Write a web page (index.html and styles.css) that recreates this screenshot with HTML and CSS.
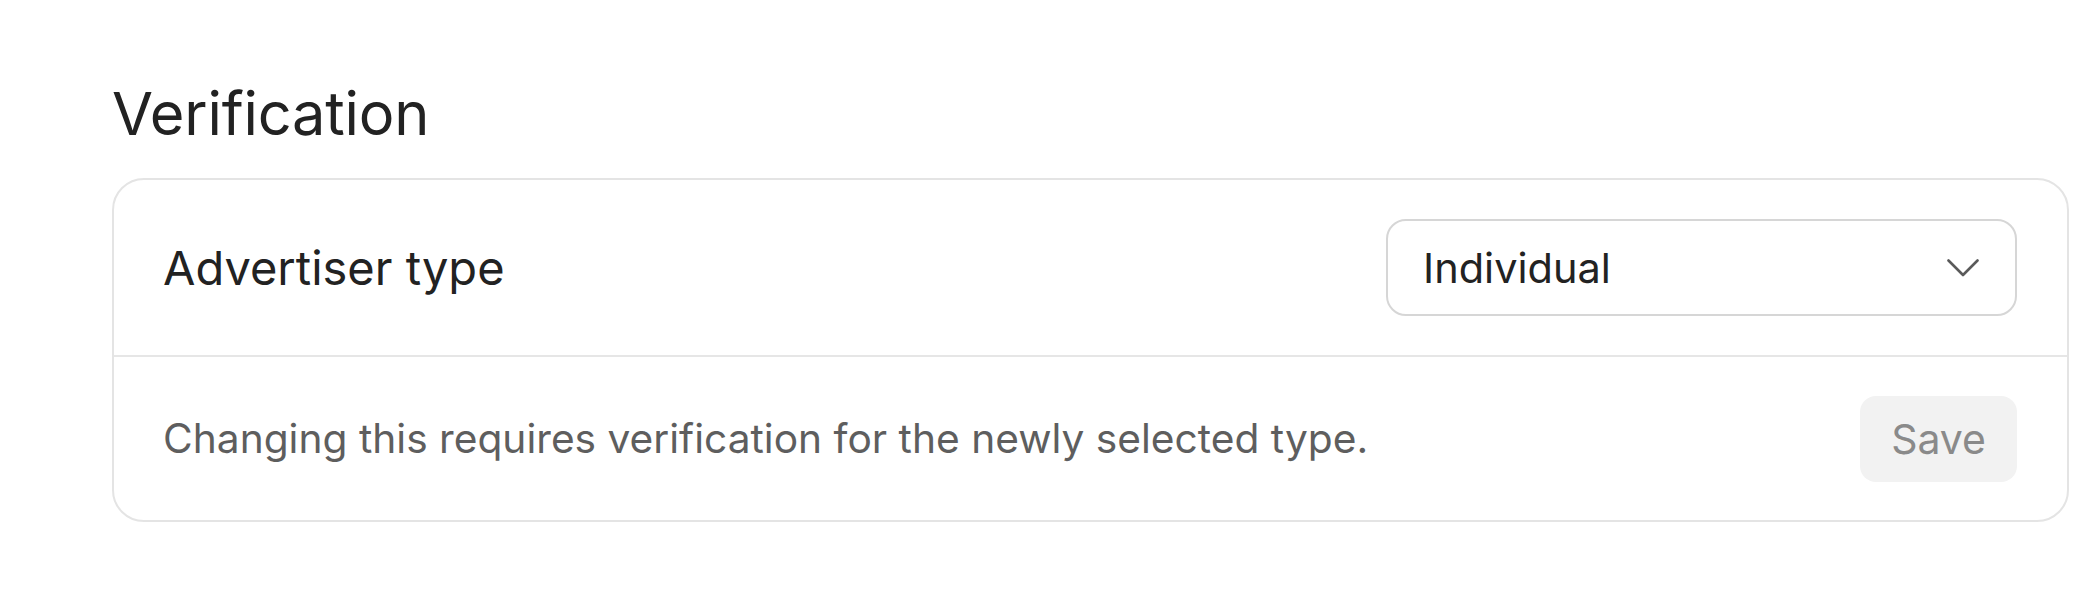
FILE: index.html
```html
<!DOCTYPE html>
<html lang="en">
<head>
<meta charset="utf-8">
<title>Verification</title>
<link rel="stylesheet" href="styles.css">
</head>
<body>
<main class="page">
  <h2 class="title">Verification</h2>
  <section class="card">
    <div class="row row-main">
      <span class="label">Advertiser type</span>
      <div class="select">
        <span class="select-value">Individual</span>
        <svg class="chevron" viewBox="0 0 32 18" width="32" height="18" aria-hidden="true">
          <polyline points="1.5,1.5 16,16 30.5,1.5" fill="none" stroke="#5a5a5a" stroke-width="2.6" stroke-linecap="round" stroke-linejoin="round"/>
        </svg>
      </div>
    </div>
    <div class="row row-foot">
      <span class="hint">Changing this requires verification for the newly selected type.</span>
      <button class="save" type="button" disabled>Save</button>
    </div>
  </section>
</main>
</body>
</html>
```

FILE: styles.css
```css
html, body {
  margin: 0;
  padding: 0;
  background: #ffffff;
}

body {
  font-family: Inter, "Liberation Sans", Arial, sans-serif;
  color: #222222;
}

.page {
  padding: 77px 22px 0 112px;
}

.title {
  margin: 0 0 29px 0;
  font-size: 59.5px;
  line-height: 72px;
  font-weight: 400;
  color: #222222;
  letter-spacing: -0.2px;
}

.card {
  border: 2px solid #e4e4e4;
  border-radius: 32px;
  background: #ffffff;
}

.row {
  display: flex;
  align-items: center;
  justify-content: space-between;
  padding-left: 49px;
  padding-right: 50px;
}

.row-main {
  padding-top: 39px;
  padding-bottom: 39px;
}

.row-foot {
  border-top: 2px solid #e6e6e6;
  padding-top: 39px;
  padding-bottom: 38px;
}

.label {
  font-size: 47px;
  line-height: 56px;
  font-weight: 400;
  color: #222222;
}

.select {
  box-sizing: border-box;
  width: 631px;
  height: 97px;
  border: 2px solid #d6d6d6;
  border-radius: 20px;
  display: flex;
  align-items: center;
  justify-content: space-between;
  padding: 0 36px 0 35px;
}

.select-value {
  font-size: 41.5px;
  line-height: 54px;
  font-weight: 400;
  color: #222222;
}

.chevron {
  display: block;
  flex: none;
}

.hint {
  font-size: 40.7px;
  line-height: 50px;
  font-weight: 400;
  color: #5e5e5e;
}

.save {
  font-family: inherit;
  font-size: 41px;
  line-height: 50px;
  font-weight: 400;
  height: 86px;
  padding: 0 31px;
  border: none;
  border-radius: 16px;
  background: #f2f2f2;
  color: #8a8a8a;
  cursor: default;
}
```
